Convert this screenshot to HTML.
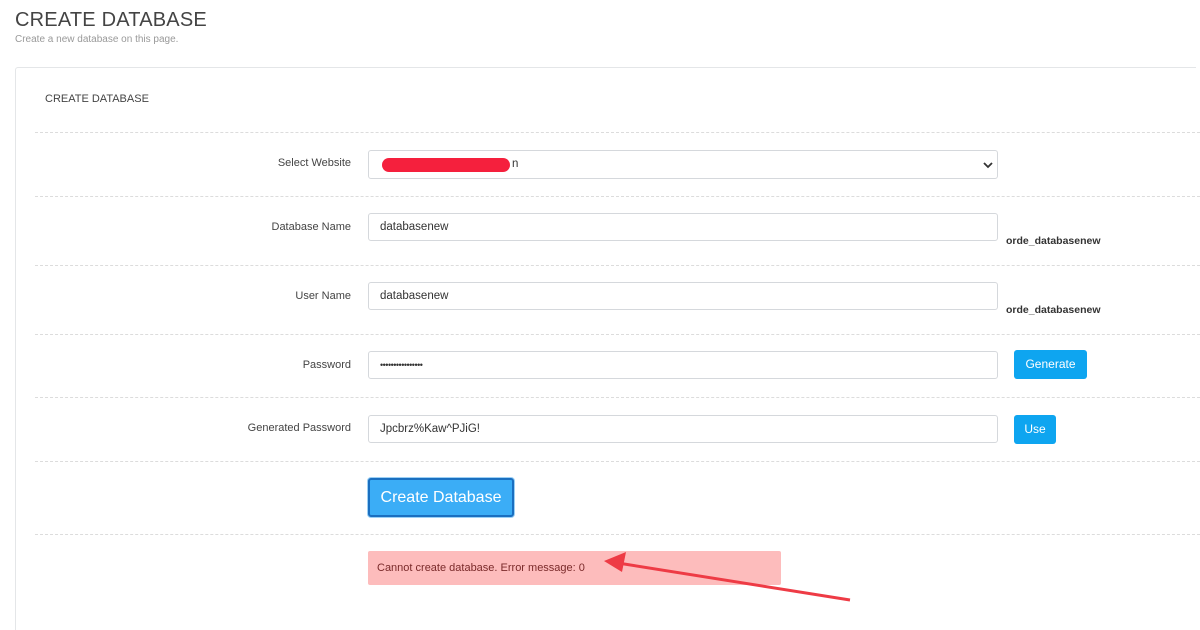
<!DOCTYPE html><html style="width:1200px;height:630px;overflow:hidden"><head><style>
body{margin:0;width:1200px;height:630px;background:#fff;font-family:"Liberation Sans",sans-serif;position:relative;overflow:hidden;color:#333}
.a{position:absolute}
.h1{left:15px;top:9px;font-size:20px;color:#444;letter-spacing:0.2px}
.sub{left:15px;top:34px;font-size:10px;color:#999}
.panel{left:15px;top:67px;width:1180px;height:570px;border:1px solid #e4e6e8;border-right:none;border-bottom:none;border-radius:3px 0 0 0}
.dash{left:35px;width:1165px;border-top:1px dashed #dcdcdc;height:0}
.lbl{font-size:11px;color:#444;text-align:right;width:200px;left:151px}
.inp{left:368px;height:27px;border:1px solid #d5d8dc;border-radius:3px;font-size:11.5px;line-height:27px;padding-left:11px;box-sizing:border-box;width:630px;color:#333}
.btn{background:#0ea5f0;color:#fff;font-size:12px;border-radius:3px;text-align:center;line-height:29px;height:29px}
.note{left:1006px;font-size:10.5px;font-weight:bold;color:#333}
</style></head><body>
<div class="a h1">CREATE DATABASE</div>
<div class="a sub">Create a new database on this page.</div>
<div class="a panel"></div>
<div class="a" style="left:45px;top:93px;font-size:11px;color:#444">CREATE DATABASE</div>
<div class="a dash" style="top:132px"></div>
<div class="a dash" style="top:196px"></div>
<div class="a dash" style="top:265px"></div>
<div class="a dash" style="top:334px"></div>
<div class="a dash" style="top:397px"></div>
<div class="a dash" style="top:461px"></div>
<div class="a dash" style="top:534px"></div>

<div class="a lbl" style="top:157px">Select Website</div>
<div class="a inp" style="top:150px;height:29px">
<div class="a" style="left:13px;top:7px;width:128px;height:14px;background:#f5203d;border-radius:7px"></div>
<span class="a" style="left:143px;top:0">n</span>
<svg class="a" style="left:614px;top:10px" width="10" height="8"><path d="M1 2l4 4 4-4" stroke="#333" stroke-width="1.8" fill="none"/></svg>
</div>

<div class="a lbl" style="top:221px">Database Name</div>
<div class="a inp" style="top:213px;height:28px">databasenew</div>
<div class="a note" style="top:235px">orde_databasenew</div>

<div class="a lbl" style="top:290px">User Name</div>
<div class="a inp" style="top:282px;height:28px">databasenew</div>
<div class="a note" style="top:304px">orde_databasenew</div>

<div class="a lbl" style="top:359px">Password</div>
<div class="a inp" style="top:351px;height:28px;font-size:9px;letter-spacing:-0.5px">••••••••••••••••</div>
<div class="a btn" style="left:1014px;top:350px;width:73px">Generate</div>

<div class="a lbl" style="top:422px">Generated Password</div>
<div class="a inp" style="top:415px;height:28px">Jpcbrz%Kaw^PJiG!</div>
<div class="a btn" style="left:1014px;top:415px;width:42px">Use</div>

<div class="a" style="left:368px;top:478px;width:142px;height:35px;background:#3badf6;border:2px solid #1a6fc0;border-radius:3px;color:#fff;font-size:16px;text-align:center;line-height:35px;box-shadow:0 0 0 1px #9cd0f5">Create Database</div>

<div class="a" style="left:368px;top:551px;width:413px;height:34px;background:#fdbcbc;border-radius:2px;font-size:11px;color:#7a2a2a;line-height:34px;padding-left:9px;box-sizing:border-box">Cannot create database. Error message: 0</div>

<svg class="a" style="left:0;top:0" width="1200" height="630"><path d="M850 600L618 563" stroke="#ee3b45" stroke-width="3"/><path d="M604 561l22-9-4 20z" fill="#ee3b45"/></svg>
</body></html>
